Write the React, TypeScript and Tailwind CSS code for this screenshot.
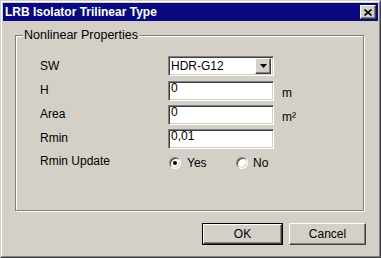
const font = "font-['Liberation_Sans',Arial,sans-serif]";

const sunken =
  "border border-t-[#808080] border-l-[#808080] border-r-white border-b-white shadow-[inset_1px_1px_0_#404040,inset_-1px_-1px_0_#d4d0c8]";
const raised =
  "border border-t-white border-l-white border-r-[#404040] border-b-[#404040] shadow-[inset_-1px_-1px_0_#808080]";

const fields = [
  { label: "H", value: "0", unit: "m" },
  { label: "Area", value: "0", unit: "m²" },
  { label: "Rmin", value: "0,01", unit: "" },
];

function Radio({ checked }: { checked?: boolean }) {
  return (
    <div
      className={`w-[12px] h-[12px] rounded-full bg-white flex items-center justify-center ${sunken}`}
    >
      {checked && <div className="w-[4px] h-[4px] rounded-full bg-black" />}
    </div>
  );
}

export default function App() {
  return (
    <div
      className={`w-[381px] h-[258px] bg-[#d4d0c8] border border-t-[#d4d0c8] border-l-[#d4d0c8] border-r-[#404040] border-b-[#404040] text-black text-[12px] ${font}`}
    >
      <div className="h-full border border-t-white border-l-white border-r-[#808080] border-b-[#808080] p-[1px] flex flex-col">
        {/* title bar */}
        <div className="h-[18px] bg-[#0a0a80] flex items-center justify-between pl-[2px] pr-[2px]">
          <span className="text-white font-bold text-[12px] leading-none">
            LRB Isolator Trilinear Type
          </span>
          <div
            className={`w-[16px] h-[14px] bg-[#d4d0c8] flex items-center justify-center ${raised}`}
          >
            <svg width="8" height="7" viewBox="0 0 8 7">
              <path
                d="M0.5 0.5 L7.5 6.5 M7.5 0.5 L0.5 6.5"
                stroke="black"
                strokeWidth="1.6"
              />
            </svg>
          </div>
        </div>

        {/* group box */}
        <div className="relative ml-[12px] mt-[14px] w-[349px] h-[176px] border border-[#808080] shadow-[1px_1px_0_white,inset_1px_1px_0_white]">
          <span className="absolute left-[7px] top-[-9px] px-[1px] bg-[#d4d0c8] leading-[16px] text-[12.5px]">
            Nonlinear Properties
          </span>

          <div className="pl-[24px] pt-[20px] flex flex-col">
            <div className="flex items-center h-[20px] mb-[5px]">
              <span className="w-[128px]">SW</span>
              <div
                className={`w-[106px] h-[20px] bg-white flex items-center justify-between pl-[2px] pr-[2px] ${sunken}`}
              >
                <span className="leading-none">HDR-G12</span>
                <div
                  className={`w-[16px] h-[16px] bg-[#d4d0c8] flex items-center justify-center ${raised}`}
                >
                  <svg width="7" height="4" viewBox="0 0 7 4">
                    <path d="M0 0 H7 L3.5 4 Z" fill="black" />
                  </svg>
                </div>
              </div>
            </div>

            <div className="flex flex-col gap-[4px]">
              {fields.map((f) => (
                <div key={f.label} className="flex items-center h-[20px]">
                  <span className="w-[128px] pb-[3px]">{f.label}</span>
                  <div
                    className={`w-[106px] h-[20px] bg-white pl-[2px] pt-[1px] ${sunken}`}
                  >
                    <span className="block leading-[10px]">{f.value}</span>
                  </div>
                  <span className="ml-[8px] pt-[3px]">{f.unit}</span>
                </div>
              ))}

              <div className="flex items-center h-[20px]">
                <span className="w-[129px] pb-[4px]">Rmin Update</span>
                <div className="flex items-center w-[67px]">
                  <Radio checked />
                  <span className="ml-[6px] pb-[1px]">Yes</span>
                </div>
                <div className="flex items-center">
                  <Radio />
                  <span className="ml-[5px] pb-[1px]">No</span>
                </div>
              </div>
            </div>
          </div>
        </div>

        {/* buttons */}
        <div className="flex justify-end gap-[6px] mt-[12px] pr-[12px]">
          <div className="w-[81px] h-[22px] border border-black">
            <div
              className={`h-full bg-[#d4d0c8] flex items-center justify-center ${raised}`}
            >
              OK
            </div>
          </div>
          <div
            className={`w-[77px] h-[22px] bg-[#d4d0c8] flex items-center justify-center ${raised}`}
          >
            Cancel
          </div>
        </div>
      </div>
    </div>
  );
}
